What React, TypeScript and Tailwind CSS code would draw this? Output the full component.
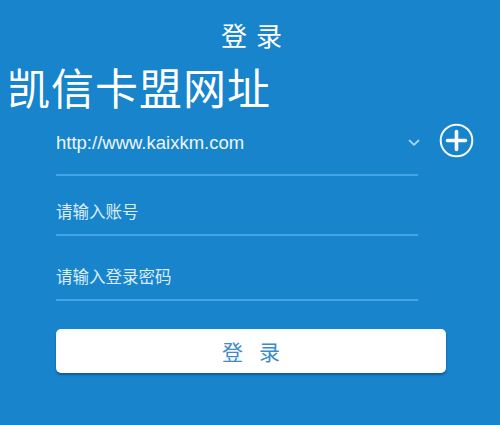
import React from "react";

export default function App() {
  const cjk = "font-['Noto_Sans_CJK_SC','Noto_Sans',sans-serif]";
  return (
    <div className={`w-[500px] h-[425px] overflow-hidden bg-[#1784cc] text-white ${cjk}`}>
      <div className="pt-[20px] text-center text-[26px] leading-[30px] tracking-[9px] pl-[12px]">登录</div>
      <div className="mt-[14px] pl-[7px] text-[43px] leading-[44px] tracking-[1px]">凯信卡盟网址</div>
      <div className="pl-[56px]">
        <div className="flex items-center">
          <div className="w-[362px] h-[68px] pt-[23px] border-b-2 border-[#45a3ea]">
            <div className="flex items-center justify-between h-[24px]">
              <span className="font-['Liberation_Sans',Arial,sans-serif] text-[18.5px] leading-[24px] text-[#eef6fc]">
                http://www.kaixkm.com
              </span>
              <svg width="12" height="8" viewBox="0 0 12 8" className="mr-[-2px]">
                <path d="M1.5 1.5 L6 5.8 L10.5 1.5" fill="none" stroke="#a9d3f3" strokeWidth="1.8" strokeLinecap="round" strokeLinejoin="round" />
              </svg>
            </div>
          </div>
          <svg width="35" height="35" viewBox="0 0 35 35" className="ml-[21px] mt-[-3px]">
            <circle cx="17.5" cy="17.5" r="15.8" fill="none" stroke="#f4f9fd" strokeWidth="2" />
            <path d="M17.5 8.5 V26.5 M8.5 17.5 H26.5" stroke="#ffffff" strokeWidth="3.6" strokeLinecap="round" />
          </svg>
        </div>
        <div className="w-[362px] h-[60px] pt-[23px] border-b-2 border-[#45a3ea] text-[16.5px] leading-[24px] text-[#dcedf9]">
          请输入账号
        </div>
        <div className="w-[362px] h-[65px] pt-[28px] border-b-2 border-[#45a3ea] text-[16.5px] leading-[24px] text-[#dcedf9]">
          请输入登录密码
        </div>
        <div className="mt-[28px] w-[390px] h-[44px] rounded-[5px] bg-white shadow-[0_2px_2px_rgba(0,40,90,0.45)] flex items-center justify-center">
          <span className="text-[21px] leading-[24px] tracking-[16px] pl-[16px] text-[#3d8cc8]">登录</span>
        </div>
      </div>
    </div>
  );
}
